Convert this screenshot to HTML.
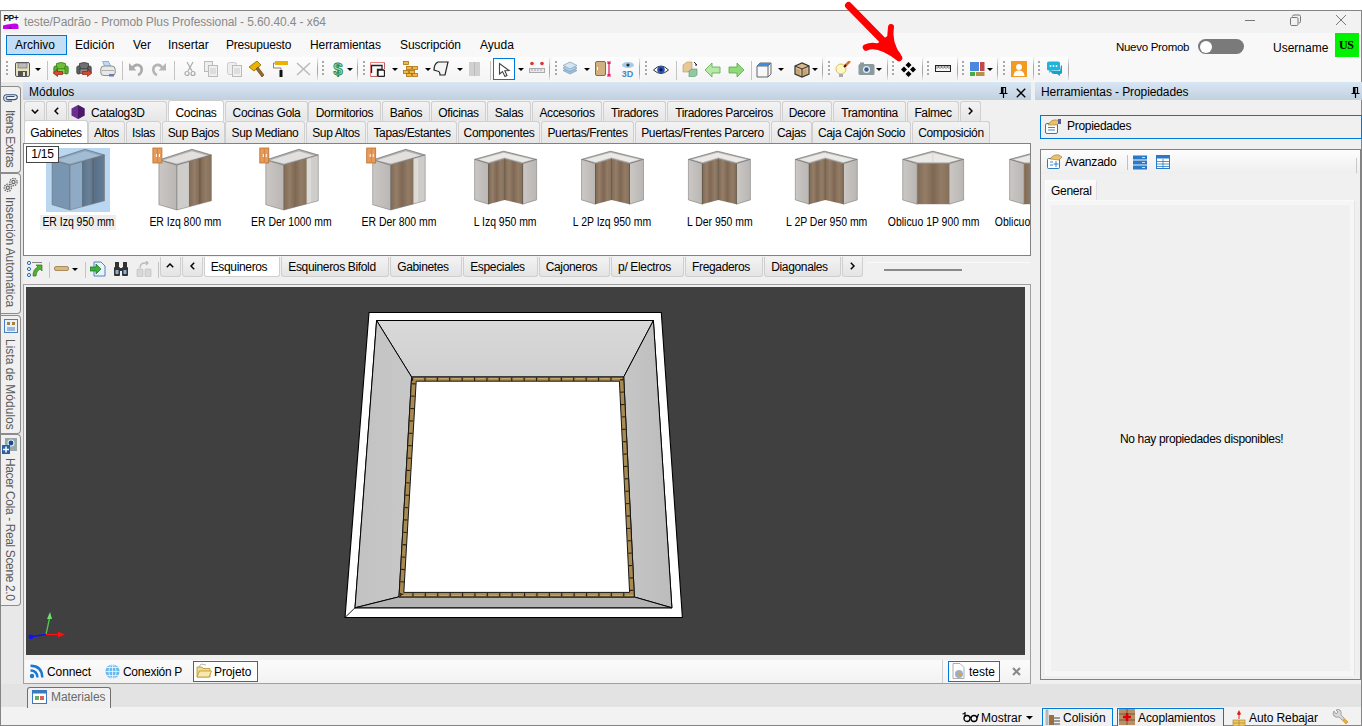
<!DOCTYPE html>
<html><head><meta charset="utf-8">
<style>
*{box-sizing:border-box}
html,body{margin:0;padding:0}
body{width:1362px;height:726px;overflow:hidden;position:relative;background:#fff;font-family:"Liberation Sans",sans-serif;font-size:12px;color:#000}
.a{position:absolute}
.t{position:absolute;white-space:nowrap;line-height:14px}
</style></head><body>
<!-- window frame -->
<div class="a" style="left:0;top:10px;width:1362px;height:716px;background:#f0f0f0;border:1px solid #858585;border-bottom:none"></div>
<!-- title bar -->
<div class="a" style="left:1px;top:11px;width:1360px;height:22px;background:#f2f2f2"></div>
<!-- menu bar -->
<div class="a" style="left:1px;top:33px;width:1360px;height:24px;background:#f8f8f8"></div>
<!-- toolbar band -->
<div class="a" style="left:1px;top:57px;width:1360px;height:25px;background:#f8f8f8"></div>

<!-- Modulos header -->
<div class="a" style="left:23px;top:82px;width:1008px;height:18px;background:linear-gradient(#d9e6f4,#c1d0e0)"></div>
<!-- right panel header -->
<div class="a" style="left:1035px;top:82px;width:327px;height:18px;background:linear-gradient(#d9e6f4,#c1d0e0)"></div>

<!-- module content box -->
<div class="a" style="left:23px;top:143px;width:1008px;height:113px;background:#fff;border:1px solid #828282"></div>

<!-- 3D viewport -->
<div class="a" style="left:26px;top:287px;width:999px;height:368px;background:#404040"></div>

<!-- bottom band -->
<div class="a" style="left:1px;top:684px;width:1360px;height:23px;background:#e3e3e3"></div>
<!-- status bar -->
<div class="a" style="left:1px;top:707px;width:1360px;height:18px;background:#f2f2f2"></div>
<div class="a" style="left:0;top:725px;width:1362px;height:1px;background:#858585"></div>

<!-- property box -->
<div class="a" style="left:1040px;top:149px;width:321px;height:530px;background:#f0f0f0;border:1px solid #828282"></div>


<!-- ===== TITLE BAR ===== -->
<svg class="a" style="left:2px;top:13px" width="17" height="17" viewBox="0 0 17 17">
<rect x="0" y="0" width="17" height="17" fill="#f7f7f7"/>
<text x="1.5" y="8.2" font-family="Liberation Sans" font-weight="bold" font-size="8.5" letter-spacing="-0.6" fill="#111">PP+</text>
<path d="M1 12.5 Q5 11 9 11 Q12 10 15 10.8 Q16.5 11.5 16.5 13 L16.5 16 L1 16 Z" fill="#c400e8"/>
<path d="M6.5 16 L8 13 L10 16Z" fill="#8000a0"/>
</svg>
<div class="t" style="left:24px;top:15px;color:#8a8a8a;letter-spacing:-0.1px">teste/Padrão - Promob Plus Professional - 5.60.40.4 - x64</div>
<div class="a" style="left:1245px;top:20px;width:10px;height:1px;background:#777"></div>
<svg class="a" style="left:1289px;top:14px" width="13" height="13" viewBox="0 0 13 13"><path d="M3.5 2.5 Q3.5 1 5 1 H10 Q11.5 1 11.5 2.5 V7.5 Q11.5 9 10 9" fill="none" stroke="#777" stroke-width="1"/><rect x="1.5" y="3.5" width="7.5" height="8" rx="1.2" fill="none" stroke="#777" stroke-width="1"/></svg>
<svg class="a" style="left:1335px;top:14px" width="12" height="12" viewBox="0 0 12 12"><path d="M1 1 L11 11 M11 1 L1 11" stroke="#777" stroke-width="1"/></svg>

<!-- ===== MENU BAR ===== -->
<div class="a" style="left:6px;top:35px;width:61px;height:20px;background:#c4def5;border:1px solid #0078d7"></div>
<div class="t" style="left:15px;top:38px">Archivo</div>
<div class="t" style="left:75px;top:38px">Edición</div>
<div class="t" style="left:133px;top:38px">Ver</div>
<div class="t" style="left:168px;top:38px">Insertar</div>
<div class="t" style="left:226px;top:38px;letter-spacing:-0.2px">Presupuesto</div>
<div class="t" style="left:310px;top:38px;letter-spacing:-0.1px">Herramientas</div>
<div class="t" style="left:400px;top:38px;letter-spacing:-0.1px">Suscripción</div>
<div class="t" style="left:480px;top:38px">Ayuda</div>
<div class="t" style="left:1116px;top:40px;font-size:11.5px;letter-spacing:-0.3px">Nuevo Promob</div>
<div class="a" style="left:1198px;top:39px;width:46px;height:15px;border-radius:8px;background:#7a7a7a"></div>
<div class="a" style="left:1200px;top:41px;width:12px;height:12px;border-radius:50%;background:#fff"></div>
<div class="t" style="left:1273px;top:41px">Username</div>
<div class="a" style="left:1335px;top:33px;width:24px;height:24px;background:#00f200"></div>
<div class="t" style="left:1339px;top:38px;font-family:'Liberation Serif',serif;font-weight:bold;font-size:12px;letter-spacing:-0.4px">US</div>


<div class="a" style="left:3px;top:57px;width:315px;height:24px;border-radius:3px 3px 0 0;background:linear-gradient(#fdfdfd,#f4f4f4)"></div>
<div class="a" style="left:317px;top:58px;width:1px;height:22px;background:linear-gradient(#f0f0f0,#a8a8a8 40%,#a8a8a8 70%,#e8e8e8)"></div>
<div class="a" style="left:6px;top:61px;width:2px;height:15px;background:repeating-linear-gradient(#a8a8a8 0,#a8a8a8 2px,transparent 2px,transparent 4px)"></div>
<div class="a" style="left:319px;top:57px;width:39px;height:24px;border-radius:3px 3px 0 0;background:linear-gradient(#fdfdfd,#f4f4f4)"></div>
<div class="a" style="left:357px;top:58px;width:1px;height:22px;background:linear-gradient(#f0f0f0,#a8a8a8 40%,#a8a8a8 70%,#e8e8e8)"></div>
<div class="a" style="left:322px;top:61px;width:2px;height:15px;background:repeating-linear-gradient(#a8a8a8 0,#a8a8a8 2px,transparent 2px,transparent 4px)"></div>
<div class="a" style="left:360px;top:57px;width:190px;height:24px;border-radius:3px 3px 0 0;background:linear-gradient(#fdfdfd,#f4f4f4)"></div>
<div class="a" style="left:549px;top:58px;width:1px;height:22px;background:linear-gradient(#f0f0f0,#a8a8a8 40%,#a8a8a8 70%,#e8e8e8)"></div>
<div class="a" style="left:363px;top:61px;width:2px;height:15px;background:repeating-linear-gradient(#a8a8a8 0,#a8a8a8 2px,transparent 2px,transparent 4px)"></div>
<div class="a" style="left:552px;top:57px;width:88px;height:24px;border-radius:3px 3px 0 0;background:linear-gradient(#fdfdfd,#f4f4f4)"></div>
<div class="a" style="left:639px;top:58px;width:1px;height:22px;background:linear-gradient(#f0f0f0,#a8a8a8 40%,#a8a8a8 70%,#e8e8e8)"></div>
<div class="a" style="left:555px;top:61px;width:2px;height:15px;background:repeating-linear-gradient(#a8a8a8 0,#a8a8a8 2px,transparent 2px,transparent 4px)"></div>
<div class="a" style="left:642px;top:57px;width:181px;height:24px;border-radius:3px 3px 0 0;background:linear-gradient(#fdfdfd,#f4f4f4)"></div>
<div class="a" style="left:822px;top:58px;width:1px;height:22px;background:linear-gradient(#f0f0f0,#a8a8a8 40%,#a8a8a8 70%,#e8e8e8)"></div>
<div class="a" style="left:645px;top:61px;width:2px;height:15px;background:repeating-linear-gradient(#a8a8a8 0,#a8a8a8 2px,transparent 2px,transparent 4px)"></div>
<div class="a" style="left:825px;top:57px;width:63px;height:24px;border-radius:3px 3px 0 0;background:linear-gradient(#fdfdfd,#f4f4f4)"></div>
<div class="a" style="left:887px;top:58px;width:1px;height:22px;background:linear-gradient(#f0f0f0,#a8a8a8 40%,#a8a8a8 70%,#e8e8e8)"></div>
<div class="a" style="left:828px;top:61px;width:2px;height:15px;background:repeating-linear-gradient(#a8a8a8 0,#a8a8a8 2px,transparent 2px,transparent 4px)"></div>
<div class="a" style="left:889px;top:57px;width:34px;height:24px;border-radius:3px 3px 0 0;background:linear-gradient(#fdfdfd,#f4f4f4)"></div>
<div class="a" style="left:922px;top:58px;width:1px;height:22px;background:linear-gradient(#f0f0f0,#a8a8a8 40%,#a8a8a8 70%,#e8e8e8)"></div>
<div class="a" style="left:892px;top:61px;width:2px;height:15px;background:repeating-linear-gradient(#a8a8a8 0,#a8a8a8 2px,transparent 2px,transparent 4px)"></div>
<div class="a" style="left:924px;top:57px;width:34px;height:24px;border-radius:3px 3px 0 0;background:linear-gradient(#fdfdfd,#f4f4f4)"></div>
<div class="a" style="left:957px;top:58px;width:1px;height:22px;background:linear-gradient(#f0f0f0,#a8a8a8 40%,#a8a8a8 70%,#e8e8e8)"></div>
<div class="a" style="left:927px;top:61px;width:2px;height:15px;background:repeating-linear-gradient(#a8a8a8 0,#a8a8a8 2px,transparent 2px,transparent 4px)"></div>
<div class="a" style="left:959px;top:57px;width:39px;height:24px;border-radius:3px 3px 0 0;background:linear-gradient(#fdfdfd,#f4f4f4)"></div>
<div class="a" style="left:997px;top:58px;width:1px;height:22px;background:linear-gradient(#f0f0f0,#a8a8a8 40%,#a8a8a8 70%,#e8e8e8)"></div>
<div class="a" style="left:962px;top:61px;width:2px;height:15px;background:repeating-linear-gradient(#a8a8a8 0,#a8a8a8 2px,transparent 2px,transparent 4px)"></div>
<div class="a" style="left:1000px;top:57px;width:34px;height:24px;border-radius:3px 3px 0 0;background:linear-gradient(#fdfdfd,#f4f4f4)"></div>
<div class="a" style="left:1033px;top:58px;width:1px;height:22px;background:linear-gradient(#f0f0f0,#a8a8a8 40%,#a8a8a8 70%,#e8e8e8)"></div>
<div class="a" style="left:1003px;top:61px;width:2px;height:15px;background:repeating-linear-gradient(#a8a8a8 0,#a8a8a8 2px,transparent 2px,transparent 4px)"></div>
<div class="a" style="left:1035px;top:57px;width:34px;height:24px;border-radius:3px 3px 0 0;background:linear-gradient(#fdfdfd,#f4f4f4)"></div>
<div class="a" style="left:1068px;top:58px;width:1px;height:22px;background:linear-gradient(#f0f0f0,#a8a8a8 40%,#a8a8a8 70%,#e8e8e8)"></div>
<div class="a" style="left:1038px;top:61px;width:2px;height:15px;background:repeating-linear-gradient(#a8a8a8 0,#a8a8a8 2px,transparent 2px,transparent 4px)"></div>
<svg class="a" style="left:15px;top:62px" width="15" height="15" viewBox="0 0 15 15"><rect x="0.5" y="0.5" width="14" height="14" rx="1.5" fill="#e6e2c0" stroke="#555"/><rect x="3" y="1" width="9" height="5" fill="#bbb" stroke="#666" stroke-width="0.6"/><rect x="3" y="9" width="9" height="6" fill="#555"/><rect x="8" y="10" width="2" height="4" fill="#e6e2c0"/></svg>
<svg class="a" style="left:35px;top:68px" width="6" height="4" viewBox="0 0 6 4"><path d="M0 0H6L3 3Z" fill="#000"/></svg>
<div class="a" style="left:47px;top:61px;width:1px;height:19px;background:#c4c4c4"></div>
<svg class="a" style="left:53px;top:61px" width="16" height="16" viewBox="0 0 16 16"><path d="M3.5 2.5 Q8 0.5 12.5 2.5 L12.5 8 L3.5 8Z" fill="#6cc03a" stroke="#3a7a1a" stroke-width="0.8"/><rect x="0.8" y="5" width="3.5" height="8" rx="1.5" fill="#5aae2e" stroke="#3a7a1a" stroke-width="0.8"/><rect x="11.7" y="5" width="3.5" height="8" rx="1.5" fill="#5aae2e" stroke="#3a7a1a" stroke-width="0.8"/><rect x="4" y="8" width="8" height="4.5" fill="#88d050" stroke="#3a7a1a" stroke-width="0.6"/><path d="M0.3 12 L4.5 8.5 V10.5 H9.5 V13.5 H4.5 V15.5Z" fill="#d84a30" stroke="#8a2010" stroke-width="0.7"/></svg>
<svg class="a" style="left:76px;top:61px" width="16" height="16" viewBox="0 0 16 16"><path d="M3.5 2.5 Q8 0.5 12.5 2.5 L12.5 8 L3.5 8Z" fill="#707070" stroke="#3a3a3a" stroke-width="0.8"/><rect x="0.8" y="5" width="3.5" height="8" rx="1.5" fill="#606060" stroke="#3a3a3a" stroke-width="0.8"/><rect x="11.7" y="5" width="3.5" height="8" rx="1.5" fill="#606060" stroke="#3a3a3a" stroke-width="0.8"/><rect x="4" y="8" width="8" height="4.5" fill="#8a8a8a" stroke="#3a3a3a" stroke-width="0.6"/><path d="M15.7 12 L11.5 8.5 V10.5 H6.5 V13.5 H11.5 V15.5Z" fill="#d84a30" stroke="#8a2010" stroke-width="0.7"/></svg>
<svg class="a" style="left:100px;top:61px" width="16" height="16" viewBox="0 0 16 16"><path d="M2.5 0.5 L8.5 0.5 L11 6 L5 6Z" fill="#b8dcf8" stroke="#6a8aa8" stroke-width="0.6"/><path d="M0.8 8 Q0.8 5 4 5 L12 5 Q15.2 5 15.2 8.5 L15.2 12 Q15.2 14.5 12 14.5 L4 14.5 Q0.8 14.5 0.8 12Z" fill="#e8e8e8" stroke="#777" stroke-width="0.8"/><path d="M2 9.5 H14" stroke="#999" stroke-width="0.7"/><rect x="9" y="13" width="5" height="2.5" fill="#6a7ab8"/></svg>
<div class="a" style="left:122px;top:61px;width:1px;height:19px;background:#c4c4c4"></div>
<svg class="a" style="left:128px;top:61px" width="16" height="16" viewBox="0 0 16 16"><path d="M4 7.5 Q7 3 10.5 4 Q14.5 5.5 13.5 10 Q12.8 13 10 14" fill="none" stroke="#ababab" stroke-width="2.6"/><path d="M1 2 L1 9.5 L8.5 9.5Z" fill="#ababab"/></svg>
<svg class="a" style="left:151px;top:61px" width="16" height="16" viewBox="0 0 16 16"><path d="M12 7.5 Q9 3 5.5 4 Q1.5 5.5 2.5 10 Q3.2 13 6 14" fill="none" stroke="#b5b5b5" stroke-width="2.6"/><path d="M15 2 L15 9.5 L7.5 9.5Z" fill="#b5b5b5"/></svg>
<div class="a" style="left:174px;top:61px;width:1px;height:19px;background:#c4c4c4"></div>
<svg class="a" style="left:182px;top:61px" width="16" height="16" viewBox="0 0 16 16"><path d="M5 1 L10 10 M11 1 L6 10" stroke="#aaa" stroke-width="1.2"/><circle cx="5" cy="12.5" r="2" fill="none" stroke="#aaa" stroke-width="1.2"/><circle cx="11" cy="12.5" r="2" fill="none" stroke="#aaa" stroke-width="1.2"/></svg>
<svg class="a" style="left:204px;top:61px" width="16" height="16" viewBox="0 0 16 16"><rect x="0.5" y="0.5" width="8" height="10" fill="#eee" stroke="#bbb"/><rect x="4.5" y="4.5" width="9" height="11" fill="#eee" stroke="#bbb"/><path d="M6 8H12M6 10H12M6 12H12" stroke="#ccc"/></svg>
<svg class="a" style="left:227px;top:61px" width="16" height="16" viewBox="0 0 16 16"><rect x="0.5" y="1.5" width="9" height="12" rx="2" fill="#eee" stroke="#ccc"/><rect x="5.5" y="4.5" width="9" height="11" fill="#f0f0f0" stroke="#bbb"/><path d="M7 8H13M7 10H13M7 12H13" stroke="#ccc"/></svg>
<svg class="a" style="left:249px;top:61px" width="16" height="16" viewBox="0 0 16 16"><path d="M0 6 L8 0 L12 4 L5 10Z" fill="#e8b400" stroke="#8a6a00" stroke-width="0.8"/><path d="M7 8 L9 6 L15 14 L13 16Z" fill="#9a6a20" stroke="#5a3a10" stroke-width="0.6"/></svg>
<svg class="a" style="left:273px;top:61px" width="16" height="16" viewBox="0 0 16 16"><rect x="2" y="0" width="13" height="4" fill="#ecb000"/><path d="M2 2 L0.5 2 L0.5 7 L8 7 L8 10" fill="none" stroke="#666" stroke-width="0.8"/><rect x="6.5" y="9" width="3" height="7" fill="#111"/></svg>
<svg class="a" style="left:296px;top:61px" width="16" height="16" viewBox="0 0 16 16"><path d="M1 2 L14 14 M14 2 L1 14" stroke="#bbb" stroke-width="1.6"/></svg>
<svg class="a" style="left:330px;top:61px" width="16" height="16" viewBox="0 0 16 16"><text x="8" y="14" text-anchor="middle" font-family="Liberation Sans" font-weight="bold" font-size="17" fill="#9be0b8" stroke="#2e8a4a" stroke-width="0.9">$</text></svg>
<svg class="a" style="left:347px;top:68px" width="6" height="4" viewBox="0 0 6 4"><path d="M0 0H6L3 3Z" fill="#000"/></svg>
<svg class="a" style="left:370px;top:62px" width="15" height="15" viewBox="0 0 15 15"><path d="M0.5 14.5V0.5H14.5" fill="none" stroke="#f08080" stroke-width="1"/><path d="M0.5 14.5H7M14.5 0.5V7" fill="none" stroke="#c06060" stroke-width="1"/><path d="M1.5 11 V3.5 H12 V7.5 H7.5 V14.5" fill="none" stroke="#222" stroke-width="1.3"/><rect x="8" y="8" width="6.5" height="6.5" rx="1.2" fill="#fff" stroke="#222" stroke-width="1.3"/></svg>
<svg class="a" style="left:392px;top:68px" width="6" height="4" viewBox="0 0 6 4"><path d="M0 0H6L3 3Z" fill="#000"/></svg>
<svg class="a" style="left:403px;top:61px" width="16" height="16" viewBox="0 0 16 16"><g fill="#f0b840" stroke="#a87010" stroke-width="0.8"><rect x="0.5" y="0.5" width="5" height="3"/><rect x="3.5" y="5.5" width="5" height="3"/><rect x="9.5" y="5.5" width="5" height="3"/><rect x="0.5" y="9.5" width="5" height="3"/><rect x="6.5" y="9.5" width="5" height="3"/><rect x="3.5" y="12.5" width="5" height="3"/><rect x="9.5" y="12.5" width="5" height="3"/></g></svg>
<svg class="a" style="left:425px;top:68px" width="6" height="4" viewBox="0 0 6 4"><path d="M0 0H6L3 3Z" fill="#000"/></svg>
<svg class="a" style="left:433px;top:61px" width="16" height="16" viewBox="0 0 16 16"><path d="M1 9 Q1 3 5 1 L15 1 L12 14 L7 14 Q7 10 4 10 Z" fill="#f4f4f4" stroke="#222" stroke-width="1.2"/></svg>
<svg class="a" style="left:457px;top:68px" width="6" height="4" viewBox="0 0 6 4"><path d="M0 0H6L3 3Z" fill="#000"/></svg>
<svg class="a" style="left:469px;top:61px" width="12" height="16" viewBox="0 0 12 16"><rect x="0" y="1" width="11" height="14" fill="#d0d0d0"/><path d="M5.5 1V15" stroke="#bbb"/></svg>
<div class="a" style="left:490px;top:61px;width:1px;height:19px;background:#c4c4c4"></div>
<div class="a" style="left:493px;top:58px;width:22px;height:22px;border:1px solid #0078d7;background:#fff"></div>
<svg class="a" style="left:498px;top:62px" width="13" height="16" viewBox="0 0 13 16"><path d="M1.5 1.5 L1.5 12 L4.5 9.5 L7 14.5 L9 13.5 L6.8 8.7 L11 8.5 Z" fill="#fff" stroke="#444" stroke-width="1.1"/></svg>
<svg class="a" style="left:518px;top:68px" width="6" height="4" viewBox="0 0 6 4"><path d="M0 0H6L3 3Z" fill="#000"/></svg>
<svg class="a" style="left:529px;top:61px" width="16" height="16" viewBox="0 0 16 16"><circle cx="3" cy="2.5" r="1.8" fill="#e03030"/><circle cx="13" cy="2.5" r="1.8" fill="#e03030"/><rect x="0.5" y="7.5" width="15" height="4" fill="#e8e8f0" stroke="#aaa"/><path d="M3 8V10M6 8V10M9 8V10M12 8V10" stroke="#888" stroke-width="0.7"/></svg>
<svg class="a" style="left:562px;top:61px" width="16" height="16" viewBox="0 0 16 16"><g stroke="#7a9ab8" stroke-width="0.7"><path d="M8 6 L15 9.5 L8 13 L1 9.5Z" fill="#9fc0dc"/><path d="M8 3.5 L15 7 L8 10.5 L1 7Z" fill="#b8d4ea"/><path d="M8 1 L15 4.5 L8 8 L1 4.5Z" fill="#d4e6f4"/></g></svg>
<svg class="a" style="left:584px;top:68px" width="6" height="4" viewBox="0 0 6 4"><path d="M0 0H6L3 3Z" fill="#000"/></svg>
<svg class="a" style="left:595px;top:61px" width="17" height="16" viewBox="0 0 17 16"><rect x="0.5" y="0.5" width="10" height="14" rx="1.5" fill="#d2b080" stroke="#8a6a40"/><rect x="2" y="6" width="1" height="3" fill="#fff"/><path d="M14 1V15M12 1H16M12 15H16" stroke="#e0185a" stroke-width="1.2"/><path d="M12 3L14 1L16 3M12 13L14 15L16 13" fill="#e0185a"/></svg>
<svg class="a" style="left:620px;top:61px" width="16" height="16" viewBox="0 0 16 16"><ellipse cx="8" cy="4" rx="6" ry="3" fill="#a8c8e8"/><circle cx="8" cy="4" r="1.6" fill="#233"/><text x="7.5" y="15.5" text-anchor="middle" font-family="Liberation Sans" font-weight="bold" font-size="9" fill="#4a88c0">3D</text></svg>
<svg class="a" style="left:653px;top:62px" width="16" height="16" viewBox="0 0 16 16"><path d="M0.5 8 Q8 0 15.5 8 Q8 15 0.5 8Z" fill="#fff" stroke="#333" stroke-width="1"/><circle cx="8" cy="7.8" r="3.8" fill="#2a50b0"/><circle cx="8" cy="7.8" r="1.5" fill="#0a1a40"/></svg>
<div class="a" style="left:676px;top:61px;width:1px;height:19px;background:#c4c4c4"></div>
<svg class="a" style="left:682px;top:61px" width="16" height="16" viewBox="0 0 16 16"><path d="M1 4 L5 1 L10 1 L10 8 L6 11 L1 11Z" fill="#e8c896" stroke="#b89060" stroke-width="0.6"/><path d="M7 10 L10 8 L15 8 L15 14 L12 16 L7 16Z" fill="#90c8a0" stroke="#5a9070" stroke-width="0.6"/><path d="M12 1 L15 4 L13 4" fill="none" stroke="#222"/></svg>
<svg class="a" style="left:705px;top:62px" width="16" height="16" viewBox="0 0 16 16"><path d="M0 8 L7 1 L7 5 L15 5 L15 11 L7 11 L7 15Z" fill="#b8e8a8" stroke="#58a848" stroke-width="0.8"/></svg>
<svg class="a" style="left:728px;top:62px" width="16" height="16" viewBox="0 0 16 16"><path d="M16 8 L9 1 L9 5 L1 5 L1 11 L9 11 L9 15Z" fill="#90d878" stroke="#58a848" stroke-width="0.8"/></svg>
<div class="a" style="left:751px;top:61px;width:1px;height:19px;background:#c4c4c4"></div>
<svg class="a" style="left:756px;top:62px" width="16" height="16" viewBox="0 0 16 16"><path d="M1 4 L4 1 L15 1 L15 12 L12 15 L1 15Z M1 4H12V15 M12 4L15 1" fill="none" stroke="#666" stroke-width="1"/><path d="M4 1 L15 1 L12 4 L1 4Z" fill="#3b8ee8"/></svg>
<svg class="a" style="left:778px;top:68px" width="6" height="4" viewBox="0 0 6 4"><path d="M0 0H6L3 3Z" fill="#000"/></svg>
<svg class="a" style="left:794px;top:62px" width="16" height="16" viewBox="0 0 16 16"><path d="M1 4 L8 1 L15 4 L15 12 L8 15 L1 12Z" fill="#d8b888" stroke="#333" stroke-width="1.2"/><path d="M1 4 L8 7 L15 4 M8 7V15" fill="none" stroke="#333" stroke-width="1"/><path d="M3 7V12M5 8V13M10 8V13M12 7V12" stroke="#9a7a50" stroke-width="0.6"/></svg>
<svg class="a" style="left:812px;top:68px" width="6" height="4" viewBox="0 0 6 4"><path d="M0 0H6L3 3Z" fill="#000"/></svg>
<svg class="a" style="left:835px;top:61px" width="17" height="16" viewBox="0 0 17 16"><circle cx="6" cy="8" r="5" fill="#fff6c0" stroke="#d8c070" stroke-width="1"/><rect x="4" y="13" width="4" height="3" fill="#aaa"/><path d="M10 5 L15 0" stroke="#e07020" stroke-width="2.5"/><path d="M9 6 L11 4" stroke="#222" stroke-width="2"/></svg>
<svg class="a" style="left:858px;top:61px" width="17" height="16" viewBox="0 0 17 16"><rect x="0.5" y="3" width="16" height="11" rx="1.5" fill="#8a9a9e"/><rect x="2" y="1.5" width="4" height="2" fill="#8a9a9e"/><circle cx="8.5" cy="8.5" r="3.5" fill="#e8f0f8"/><circle cx="8.5" cy="8.5" r="2.2" fill="#3a6090"/></svg>
<svg class="a" style="left:876px;top:68px" width="6" height="4" viewBox="0 0 6 4"><path d="M0 0H6L3 3Z" fill="#000"/></svg>
<svg class="a" style="left:901px;top:62px" width="15" height="15" viewBox="0 0 15 15"><g fill="#000"><path d="M7.5 0 L10.5 3 L7.5 6 L4.5 3Z"/><path d="M3 4.5 L6 7.5 L3 10.5 L0 7.5Z"/><path d="M12 4.5 L15 7.5 L12 10.5 L9 7.5Z"/><path d="M7.5 9 L10.5 12 L7.5 15 L4.5 12Z"/></g></svg>
<svg class="a" style="left:935px;top:61px" width="16" height="16" viewBox="0 0 16 16"><rect x="0.5" y="4.5" width="15" height="6" fill="#f8f8f8" stroke="#222" stroke-width="1"/><path d="M2 5V8M3.5 5V7M5 5V8M6.5 5V7M8 5V8M9.5 5V7M11 5V8M12.5 5V7M14 5V8" stroke="#333" stroke-width="0.6"/></svg>
<svg class="a" style="left:970px;top:61px" width="16" height="16" viewBox="0 0 16 16"><rect x="0" y="1" width="9" height="9" fill="#4a88e0"/><rect x="10" y="1" width="4.5" height="9" fill="#c04848"/><rect x="0" y="11" width="5" height="4" fill="#40b040"/><rect x="6" y="11" width="8.5" height="4" fill="#b89048"/></svg>
<svg class="a" style="left:987px;top:68px" width="6" height="4" viewBox="0 0 6 4"><path d="M0 0H6L3 3Z" fill="#000"/></svg>
<svg class="a" style="left:1011px;top:61px" width="16" height="16" viewBox="0 0 16 16"><rect x="0" y="0" width="16" height="16" fill="#f49a20"/><circle cx="8" cy="6" r="3" fill="#fff"/><path d="M2.5 15 Q3 9.5 8 9.5 Q13 9.5 13.5 15Z" fill="#fff"/></svg>
<svg class="a" style="left:1046px;top:61px" width="16" height="16" viewBox="0 0 16 16"><path d="M1 2 Q1 0.5 3 0.5 L12 0.5 Q14 0.5 14 2 L14 8 Q14 9.5 12 9.5 L6 9.5 L3 12 L3.5 9.5 L3 9.5 Q1 9.5 1 8Z" fill="#1eb4dc"/><path d="M5 10 L14 10 L15 4 L16 5 L16 12 Q16 13 14 13 L14 15 L11 13 L8 13 Q6 13 5 11Z" fill="#18a0c8"/><circle cx="4.5" cy="5" r="0.9" fill="#fff"/><circle cx="7.5" cy="5" r="0.9" fill="#fff"/><circle cx="10.5" cy="5" r="0.9" fill="#fff"/></svg>
<div class="a" style="left:1px;top:82px;width:22px;height:602px;background:#e8e8e8"></div>
<div class="a" style="left:1px;top:86px;width:20px;height:87px;background:#f0f0f0;border:1px solid #8c8c8c;border-left:none;border-radius:0 4px 4px 0"></div>
<div class="t" style="left:5px;top:109.5px;letter-spacing:-0.5px;transform-origin:0 0;transform:translate(12px,0) rotate(90deg);color:#5a5a5a">Itens Extras</div>
<div class="a" style="left:1px;top:173px;width:20px;height:141px;background:#f0f0f0;border:1px solid #8c8c8c;border-left:none;border-radius:0 4px 4px 0"></div>
<div class="t" style="left:5px;top:196.5px;letter-spacing:-0.07px;transform-origin:0 0;transform:translate(12px,0) rotate(90deg);color:#5a5a5a">Inserción Automática</div>
<div class="a" style="left:1px;top:315px;width:20px;height:119px;background:#f0f0f0;border:1px solid #8c8c8c;border-left:none;border-radius:0 4px 4px 0"></div>
<div class="t" style="left:5px;top:338.5px;letter-spacing:0px;transform-origin:0 0;transform:translate(12px,0) rotate(90deg);color:#5a5a5a">Lista de Módulos</div>
<div class="a" style="left:1px;top:434px;width:20px;height:172px;background:#f0f0f0;border:1px solid #8c8c8c;border-left:none;border-radius:0 4px 4px 0"></div>
<div class="t" style="left:5px;top:457.5px;letter-spacing:-0.38px;transform-origin:0 0;transform:translate(12px,0) rotate(90deg);color:#5a5a5a">Hacer Cola - Real Scene 2.0</div>
<svg class="a" style="left:3px;top:94px" width="15" height="8" viewBox="0 0 15 8"><path d="M9 7.3 H3.6 Q0.7 7.3 0.7 4 Q0.7 0.7 3.6 0.7 H11.5 Q14.3 0.7 14.3 3.3 Q14.3 5.6 11.5 5.6 H5 Q3 5.6 3 4 Q3 2.4 5 2.4 H11.5" fill="none" stroke="#34507a" stroke-width="1.05"/></svg>
<svg class="a" style="left:3px;top:177px" width="15" height="16" viewBox="0 0 15 16"><g fill="none" stroke="#6a6a6a" stroke-width="1.2"><circle cx="4.8" cy="10.8" r="3.6" stroke-dasharray="1.6 0.9"/><circle cx="4.8" cy="10.8" r="1.6"/><circle cx="10.5" cy="5" r="3.6" stroke-dasharray="1.6 0.9"/><circle cx="10.5" cy="5" r="1.6"/></g></svg>
<svg class="a" style="left:4px;top:319px" width="14" height="14" viewBox="0 0 14 14"><rect x="0.5" y="0.5" width="13" height="13" fill="#e8f0f8" stroke="#4a80c0"/><rect x="3" y="3" width="3" height="3" fill="#a88040"/><rect x="8" y="3" width="3" height="3" fill="#a88040"/><path d="M3 9H11M3 11H11" stroke="#4a80c0"/></svg>
<svg class="a" style="left:2px;top:438px" width="16" height="16" viewBox="0 0 16 16"><rect x="3" y="0" width="12" height="13" fill="#98a8a8"/><circle cx="9" cy="5" r="3.5" fill="#e0f0f8"/><circle cx="9" cy="5" r="2.4" fill="#1a4a8a"/><rect x="0" y="7" width="8" height="9" fill="#2a60a8"/><path d="M4 8.5V14.5M1 11.5H7" stroke="#fff" stroke-width="1.5"/></svg>
<div class="t" style="left:29px;top:85px;">Módulos</div>
<svg class="a" style="left:999px;top:87px" width="9" height="11" viewBox="0 0 9 11"><path d="M2 0.5H7M2.5 0.5V6M6.5 0.5V6M0.5 6.5H8.5M4.5 6.5V11" stroke="#000" stroke-width="1.2" fill="none"/><rect x="2.5" y="1" width="2" height="5" fill="#000"/></svg>
<svg class="a" style="left:1016px;top:88px" width="10" height="10" viewBox="0 0 10 10"><path d="M0.8 0.8L9.2 9.2M9.2 0.8L0.8 9.2" stroke="#000" stroke-width="1.4"/></svg>
<div class="a" style="left:24px;top:101px;width:21px;height:20px;background:linear-gradient(#f3f3f3,#e6e6e6);border:1px solid #cfcfcf;border-bottom:none;border-radius:3px 3px 0 0"></div>
<div class="a" style="left:46px;top:101px;width:21px;height:20px;background:linear-gradient(#f3f3f3,#e6e6e6);border:1px solid #cfcfcf;border-bottom:none;border-radius:3px 3px 0 0"></div>
<div class="a" style="left:68px;top:101px;width:99px;height:20px;background:linear-gradient(#f3f3f3,#e6e6e6);border:1px solid #cfcfcf;border-bottom:none;border-radius:3px 3px 0 0"></div>
<div class="a" style="left:168px;top:100px;width:56px;height:21px;background:#ffffff;border:1px solid #cfcfcf;border-bottom:none;border-radius:3px 3px 0 0"></div>
<div class="t" style="left:168px;top:106px;width:56px;text-align:center;letter-spacing:-0.35px">Cocinas</div>
<div class="a" style="left:225px;top:101px;width:83px;height:20px;background:linear-gradient(#f3f3f3,#e6e6e6);border:1px solid #cfcfcf;border-bottom:none;border-radius:3px 3px 0 0"></div>
<div class="t" style="left:225px;top:106px;width:83px;text-align:center;letter-spacing:-0.35px">Cocinas Gola</div>
<div class="a" style="left:308px;top:101px;width:73px;height:20px;background:linear-gradient(#f3f3f3,#e6e6e6);border:1px solid #cfcfcf;border-bottom:none;border-radius:3px 3px 0 0"></div>
<div class="t" style="left:308px;top:106px;width:73px;text-align:center;letter-spacing:-0.35px">Dormitorios</div>
<div class="a" style="left:382px;top:101px;width:48px;height:20px;background:linear-gradient(#f3f3f3,#e6e6e6);border:1px solid #cfcfcf;border-bottom:none;border-radius:3px 3px 0 0"></div>
<div class="t" style="left:382px;top:106px;width:48px;text-align:center;letter-spacing:-0.35px">Baños</div>
<div class="a" style="left:431px;top:101px;width:55px;height:20px;background:linear-gradient(#f3f3f3,#e6e6e6);border:1px solid #cfcfcf;border-bottom:none;border-radius:3px 3px 0 0"></div>
<div class="t" style="left:431px;top:106px;width:55px;text-align:center;letter-spacing:-0.35px">Oficinas</div>
<div class="a" style="left:487px;top:101px;width:44px;height:20px;background:linear-gradient(#f3f3f3,#e6e6e6);border:1px solid #cfcfcf;border-bottom:none;border-radius:3px 3px 0 0"></div>
<div class="t" style="left:487px;top:106px;width:44px;text-align:center;letter-spacing:-0.35px">Salas</div>
<div class="a" style="left:532px;top:101px;width:70px;height:20px;background:linear-gradient(#f3f3f3,#e6e6e6);border:1px solid #cfcfcf;border-bottom:none;border-radius:3px 3px 0 0"></div>
<div class="t" style="left:532px;top:106px;width:70px;text-align:center;letter-spacing:-0.35px">Accesorios</div>
<div class="a" style="left:603px;top:101px;width:63px;height:20px;background:linear-gradient(#f3f3f3,#e6e6e6);border:1px solid #cfcfcf;border-bottom:none;border-radius:3px 3px 0 0"></div>
<div class="t" style="left:603px;top:106px;width:63px;text-align:center;letter-spacing:-0.35px">Tiradores</div>
<div class="a" style="left:667px;top:101px;width:114px;height:20px;background:linear-gradient(#f3f3f3,#e6e6e6);border:1px solid #cfcfcf;border-bottom:none;border-radius:3px 3px 0 0"></div>
<div class="t" style="left:667px;top:106px;width:114px;text-align:center;letter-spacing:-0.35px">Tiradores Parceiros</div>
<div class="a" style="left:782px;top:101px;width:50px;height:20px;background:linear-gradient(#f3f3f3,#e6e6e6);border:1px solid #cfcfcf;border-bottom:none;border-radius:3px 3px 0 0"></div>
<div class="t" style="left:782px;top:106px;width:50px;text-align:center;letter-spacing:-0.35px">Decore</div>
<div class="a" style="left:833px;top:101px;width:73px;height:20px;background:linear-gradient(#f3f3f3,#e6e6e6);border:1px solid #cfcfcf;border-bottom:none;border-radius:3px 3px 0 0"></div>
<div class="t" style="left:833px;top:106px;width:73px;text-align:center;letter-spacing:-0.35px">Tramontina</div>
<div class="a" style="left:907px;top:101px;width:52px;height:20px;background:linear-gradient(#f3f3f3,#e6e6e6);border:1px solid #cfcfcf;border-bottom:none;border-radius:3px 3px 0 0"></div>
<div class="t" style="left:907px;top:106px;width:52px;text-align:center;letter-spacing:-0.35px">Falmec</div>
<div class="a" style="left:960px;top:101px;width:21px;height:20px;background:linear-gradient(#f3f3f3,#e6e6e6);border:1px solid #cfcfcf;border-bottom:none;border-radius:3px 3px 0 0"></div>
<div class="t" style="left:91px;top:106px;letter-spacing:-0.35px">Catalog3D</div>
<svg class="a" style="left:71px;top:105px" width="14" height="14" viewBox="0 0 14 14"><path d="M7 0 L13.5 3.5 L13.5 10.5 L7 14 L0.5 10.5 L0.5 3.5Z" fill="#6b2d8e"/><path d="M7 0 L13.5 3.5 L13.5 10.5 L7 14Z" fill="#4a1868"/></svg>
<svg class="a" style="left:31px;top:109px" width="8" height="5" viewBox="0 0 8 5"><path d="M0.8 0.8L4 4L7.2 0.8" fill="none" stroke="#000" stroke-width="1.5"/></svg>
<svg class="a" style="left:54px;top:107px" width="5" height="8" viewBox="0 0 5 8"><path d="M4.2 0.8L1 4L4.2 7.2" fill="none" stroke="#000" stroke-width="1.5"/></svg>
<svg class="a" style="left:968px;top:107px" width="5" height="8" viewBox="0 0 5 8"><path d="M0.8 0.8L4 4L0.8 7.2" fill="none" stroke="#000" stroke-width="1.5"/></svg>
<div class="a" style="left:24px;top:120px;width:64px;height:23px;background:#ffffff;border:1px solid #cfcfcf;border-bottom:none;border-radius:3px 3px 0 0"></div>
<div class="t" style="left:24px;top:126px;width:64px;text-align:center;letter-spacing:-0.35px">Gabinetes</div>
<div class="a" style="left:88px;top:121px;width:37px;height:22px;background:linear-gradient(#f3f3f3,#e6e6e6);border:1px solid #cfcfcf;border-bottom:none;border-radius:3px 3px 0 0"></div>
<div class="t" style="left:88px;top:126px;width:37px;text-align:center;letter-spacing:-0.35px">Altos</div>
<div class="a" style="left:126px;top:121px;width:35px;height:22px;background:linear-gradient(#f3f3f3,#e6e6e6);border:1px solid #cfcfcf;border-bottom:none;border-radius:3px 3px 0 0"></div>
<div class="t" style="left:126px;top:126px;width:35px;text-align:center;letter-spacing:-0.35px">Islas</div>
<div class="a" style="left:162px;top:121px;width:63px;height:22px;background:linear-gradient(#f3f3f3,#e6e6e6);border:1px solid #cfcfcf;border-bottom:none;border-radius:3px 3px 0 0"></div>
<div class="t" style="left:162px;top:126px;width:63px;text-align:center;letter-spacing:-0.35px">Sup Bajos</div>
<div class="a" style="left:225px;top:121px;width:80px;height:22px;background:linear-gradient(#f3f3f3,#e6e6e6);border:1px solid #cfcfcf;border-bottom:none;border-radius:3px 3px 0 0"></div>
<div class="t" style="left:225px;top:126px;width:80px;text-align:center;letter-spacing:-0.35px">Sup Mediano</div>
<div class="a" style="left:306px;top:121px;width:60px;height:22px;background:linear-gradient(#f3f3f3,#e6e6e6);border:1px solid #cfcfcf;border-bottom:none;border-radius:3px 3px 0 0"></div>
<div class="t" style="left:306px;top:126px;width:60px;text-align:center;letter-spacing:-0.35px">Sup Altos</div>
<div class="a" style="left:367px;top:121px;width:90px;height:22px;background:linear-gradient(#f3f3f3,#e6e6e6);border:1px solid #cfcfcf;border-bottom:none;border-radius:3px 3px 0 0"></div>
<div class="t" style="left:367px;top:126px;width:90px;text-align:center;letter-spacing:-0.35px">Tapas/Estantes</div>
<div class="a" style="left:458px;top:121px;width:82px;height:22px;background:linear-gradient(#f3f3f3,#e6e6e6);border:1px solid #cfcfcf;border-bottom:none;border-radius:3px 3px 0 0"></div>
<div class="t" style="left:458px;top:126px;width:82px;text-align:center;letter-spacing:-0.35px">Componentes</div>
<div class="a" style="left:541px;top:121px;width:93px;height:22px;background:linear-gradient(#f3f3f3,#e6e6e6);border:1px solid #cfcfcf;border-bottom:none;border-radius:3px 3px 0 0"></div>
<div class="t" style="left:541px;top:126px;width:93px;text-align:center;letter-spacing:-0.35px">Puertas/Frentes</div>
<div class="a" style="left:635px;top:121px;width:135px;height:22px;background:linear-gradient(#f3f3f3,#e6e6e6);border:1px solid #cfcfcf;border-bottom:none;border-radius:3px 3px 0 0"></div>
<div class="t" style="left:635px;top:126px;width:135px;text-align:center;letter-spacing:-0.35px">Puertas/Frentes Parcero</div>
<div class="a" style="left:771px;top:121px;width:41px;height:22px;background:linear-gradient(#f3f3f3,#e6e6e6);border:1px solid #cfcfcf;border-bottom:none;border-radius:3px 3px 0 0"></div>
<div class="t" style="left:771px;top:126px;width:41px;text-align:center;letter-spacing:-0.35px">Cajas</div>
<div class="a" style="left:812px;top:121px;width:99px;height:22px;background:linear-gradient(#f3f3f3,#e6e6e6);border:1px solid #cfcfcf;border-bottom:none;border-radius:3px 3px 0 0"></div>
<div class="t" style="left:812px;top:126px;width:99px;text-align:center;letter-spacing:-0.35px">Caja Cajón Socio</div>
<div class="a" style="left:912px;top:121px;width:78px;height:22px;background:linear-gradient(#f3f3f3,#e6e6e6);border:1px solid #cfcfcf;border-bottom:none;border-radius:3px 3px 0 0"></div>
<div class="t" style="left:912px;top:126px;width:78px;text-align:center;letter-spacing:-0.35px">Composición</div>
<svg class="a" style="left:25px;top:144px" width="1005" height="112" viewBox="25 144 1005 112"><defs><linearGradient id="wd" x1="0" x2="1"><stop offset="0" stop-color="#806a55"/><stop offset="0.25" stop-color="#947e68"/><stop offset="0.5" stop-color="#7e6854"/><stop offset="0.75" stop-color="#927c66"/><stop offset="1" stop-color="#86705a"/></linearGradient><linearGradient id="sd" x1="0" x2="1"><stop offset="0" stop-color="#cac7c4"/><stop offset="1" stop-color="#b9b6b3"/></linearGradient><linearGradient id="bwd" x1="0" x2="1"><stop offset="0" stop-color="#5a7288"/><stop offset="0.3" stop-color="#6a8298"/><stop offset="0.6" stop-color="#58708a"/><stop offset="1" stop-color="#667e94"/></linearGradient></defs><rect x="46" y="148" width="64" height="64" fill="#b9d7f1"/><polygon points="52.0,160 85.0,149.3 104.5,155 70.0,165.2" fill="#8aa6c0" stroke="#6e6e6e" stroke-width="0.7"/><polygon points="56.5,160.3 85.0,151.2 100.0,155.5 70.0,163.6" fill="#a2bcd4"/><polygon points="52.0,160 70.0,165.2 70.0,210 52.0,204.7" fill="#7896b2" stroke="#6e6e6e" stroke-width="0.5"/><polygon points="70.0,165.2 82.0,161.7 82.0,206.8 70.0,210.0" fill="#8eaac4"/><polygon points="82.0,161.7 104.5,155.0 104.5,200.8 82.0,206.8" fill="url(#bwd)"/><path d="M93.0 158.4V203.9" stroke="#5a4838" stroke-width="0.6"/><polygon points="70.0,165.2 104.5,155 104.5,200.8 70.0,210" fill="none" stroke="#6e6e6e" stroke-width="0.5"/><polygon points="158.9,160 191.9,149.3 211.4,155 176.9,165.2" fill="#b4b2b0" stroke="#6e6e6e" stroke-width="0.7"/><polygon points="163.4,160.3 191.9,151.2 206.9,155.5 176.9,163.6" fill="#e2e0de"/><polygon points="158.9,160 176.9,165.2 176.9,210 158.9,204.7" fill="url(#sd)" stroke="#6e6e6e" stroke-width="0.5"/><polygon points="176.9,165.2 188.9,161.7 188.9,206.8 176.9,210.0" fill="#cfcdca"/><polygon points="188.9,161.7 211.4,155.0 211.4,200.8 188.9,206.8" fill="url(#wd)"/><path d="M199.9 158.4V203.9" stroke="#5a4838" stroke-width="0.6"/><polygon points="176.9,165.2 211.4,155 211.4,200.8 176.9,210" fill="none" stroke="#6e6e6e" stroke-width="0.5"/><rect x="152.9" y="148" width="9" height="15" fill="#e89a58" stroke="#b87030" stroke-width="0.8"/><path d="M157.4 149V162" stroke="#b86a28" stroke-width="0.5"/><rect x="155.9" y="154" width="1" height="3" fill="#fff"/><rect x="158.9" y="154" width="1" height="3" fill="#fff"/><polygon points="265.8,160 298.8,149.3 318.3,155 283.8,165.2" fill="#b4b2b0" stroke="#6e6e6e" stroke-width="0.7"/><polygon points="270.3,160.3 298.8,151.2 313.8,155.5 283.8,163.6" fill="#e2e0de"/><polygon points="265.8,160 283.8,165.2 283.8,210 265.8,204.7" fill="url(#sd)" stroke="#6e6e6e" stroke-width="0.5"/><polygon points="283.8,165.2 306.8,158.4 306.8,203.9 283.8,210.0" fill="url(#wd)"/><polygon points="306.8,158.4 310.8,157.2 310.8,202.8 306.8,203.9" fill="#dcdad6"/><polygon points="310.8,157.2 318.3,155.0 318.3,200.8 310.8,202.8" fill="#cfcdca"/><polygon points="283.8,165.2 318.3,155 318.3,200.8 283.8,210" fill="none" stroke="#6e6e6e" stroke-width="0.5"/><rect x="259.8" y="148" width="9" height="15" fill="#e89a58" stroke="#b87030" stroke-width="0.8"/><path d="M264.3 149V162" stroke="#b86a28" stroke-width="0.5"/><rect x="262.8" y="154" width="1" height="3" fill="#fff"/><rect x="265.8" y="154" width="1" height="3" fill="#fff"/><polygon points="372.7,160 405.7,149.3 425.2,155 390.7,165.2" fill="#b4b2b0" stroke="#6e6e6e" stroke-width="0.7"/><polygon points="377.2,160.3 405.7,151.2 420.7,155.5 390.7,163.6" fill="#e2e0de"/><polygon points="372.7,160 390.7,165.2 390.7,210 372.7,204.7" fill="url(#sd)" stroke="#6e6e6e" stroke-width="0.5"/><polygon points="390.7,165.2 413.7,158.4 413.7,203.9 390.7,210.0" fill="url(#wd)"/><polygon points="413.7,158.4 417.7,157.2 417.7,202.8 413.7,203.9" fill="#dcdad6"/><polygon points="417.7,157.2 425.2,155.0 425.2,200.8 417.7,202.8" fill="#cfcdca"/><polygon points="390.7,165.2 425.2,155 425.2,200.8 390.7,210" fill="none" stroke="#6e6e6e" stroke-width="0.5"/><rect x="366.7" y="148" width="9" height="15" fill="#e89a58" stroke="#b87030" stroke-width="0.8"/><path d="M371.2 149V162" stroke="#b86a28" stroke-width="0.5"/><rect x="369.7" y="154" width="1" height="3" fill="#fff"/><rect x="372.7" y="154" width="1" height="3" fill="#fff"/><polygon points="474.6,159.4 503.6,151.2 536.6,159.4 522.6,163.7 504.6,158.9 488.6,163.7" fill="#b8b6b4" stroke="#6e6e6e" stroke-width="0.7"/><polygon points="478.6,159.6 503.6,152.8 532.6,159.6 522.6,162.2 504.6,157.6 488.6,162.2" fill="#ebe9e6"/><polygon points="474.6,159.4 488.6,163.7 488.6,204.2 474.6,199.9" fill="url(#sd)" stroke="#6e6e6e" stroke-width="0.5"/><polygon points="522.6,163.7 536.6,159.4 536.6,199.9 522.6,204.2" fill="url(#sd)" stroke="#6e6e6e" stroke-width="0.5"/><polygon points="488.6,163.7 504.6,158.9 504.6,199.9 488.6,204.2" fill="url(#wd)"/><polygon points="504.6,158.9 522.6,163.7 522.6,204.2 504.6,199.9" fill="url(#wd)"/><path d="M488.6 163.7V204.2M522.6 163.7V204.2M504.6 158.9V199.9" stroke="#4a3a2a" stroke-width="0.6"/><polygon points="581.5,159.4 610.5,151.2 643.5,159.4 629.5,163.7 611.5,158.9 595.5,163.7" fill="#b8b6b4" stroke="#6e6e6e" stroke-width="0.7"/><polygon points="585.5,159.6 610.5,152.8 639.5,159.6 629.5,162.2 611.5,157.6 595.5,162.2" fill="#ebe9e6"/><polygon points="581.5,159.4 595.5,163.7 595.5,204.2 581.5,199.9" fill="url(#sd)" stroke="#6e6e6e" stroke-width="0.5"/><polygon points="629.5,163.7 643.5,159.4 643.5,199.9 629.5,204.2" fill="url(#sd)" stroke="#6e6e6e" stroke-width="0.5"/><polygon points="595.5,163.7 611.5,158.9 611.5,199.9 595.5,204.2" fill="url(#wd)"/><polygon points="611.5,158.9 629.5,163.7 629.5,204.2 611.5,199.9" fill="url(#wd)"/><path d="M595.5 163.7V204.2M629.5 163.7V204.2M611.5 158.9V199.9" stroke="#4a3a2a" stroke-width="0.6"/><polygon points="688.4,159.4 717.4,151.2 750.4,159.4 736.4,163.7 718.4,158.9 702.4,163.7" fill="#b8b6b4" stroke="#6e6e6e" stroke-width="0.7"/><polygon points="692.4,159.6 717.4,152.8 746.4,159.6 736.4,162.2 718.4,157.6 702.4,162.2" fill="#ebe9e6"/><polygon points="688.4,159.4 702.4,163.7 702.4,204.2 688.4,199.9" fill="url(#sd)" stroke="#6e6e6e" stroke-width="0.5"/><polygon points="736.4,163.7 750.4,159.4 750.4,199.9 736.4,204.2" fill="url(#sd)" stroke="#6e6e6e" stroke-width="0.5"/><polygon points="702.4,163.7 718.4,158.9 718.4,199.9 702.4,204.2" fill="url(#wd)"/><polygon points="718.4,158.9 736.4,163.7 736.4,204.2 718.4,199.9" fill="url(#wd)"/><path d="M702.4 163.7V204.2M736.4 163.7V204.2M718.4 158.9V199.9" stroke="#4a3a2a" stroke-width="0.6"/><polygon points="795.3,159.4 824.3,151.2 857.3,159.4 843.3,163.7 825.3,158.9 809.3,163.7" fill="#b8b6b4" stroke="#6e6e6e" stroke-width="0.7"/><polygon points="799.3,159.6 824.3,152.8 853.3,159.6 843.3,162.2 825.3,157.6 809.3,162.2" fill="#ebe9e6"/><polygon points="795.3,159.4 809.3,163.7 809.3,204.2 795.3,199.9" fill="url(#sd)" stroke="#6e6e6e" stroke-width="0.5"/><polygon points="843.3,163.7 857.3,159.4 857.3,199.9 843.3,204.2" fill="url(#sd)" stroke="#6e6e6e" stroke-width="0.5"/><polygon points="809.3,163.7 825.3,158.9 825.3,199.9 809.3,204.2" fill="url(#wd)"/><polygon points="825.3,158.9 843.3,163.7 843.3,204.2 825.3,199.9" fill="url(#wd)"/><path d="M809.3 163.7V204.2M843.3 163.7V204.2M825.3 158.9V199.9" stroke="#4a3a2a" stroke-width="0.6"/><polygon points="902.7,159.4 932.8000000000001,151.2 963.6,159.4 949.2,163.7 917.2,163.7" fill="#b8b6b4" stroke="#6e6e6e" stroke-width="0.7"/><polygon points="906.7,159.6 932.8000000000001,152.8 959.6,159.6 948.7,162.3 917.7,162.3" fill="#ebe9e6"/><path d="M932.8000000000001 152.8 V162.3" stroke="#d0cecc" stroke-width="0.7"/><polygon points="902.7,159.4 917.2,163.7 917.2,204.2 902.7,200" fill="url(#sd)" stroke="#6e6e6e" stroke-width="0.5"/><polygon points="949.2,163.7 963.6,159.4 963.6,200 949.2,204.2" fill="url(#sd)" stroke="#6e6e6e" stroke-width="0.5"/><rect x="917.2" y="163.7" width="32" height="40.5" fill="url(#wd)"/><polygon points="1009.5999999999999,159.4 1039.6999999999998,151.2 1070.5,159.4 1056.1,163.7 1024.1,163.7" fill="#b8b6b4" stroke="#6e6e6e" stroke-width="0.7"/><polygon points="1013.5999999999999,159.6 1039.6999999999998,152.8 1066.5,159.6 1055.6,162.3 1024.6,162.3" fill="#ebe9e6"/><path d="M1039.6999999999998 152.8 V162.3" stroke="#d0cecc" stroke-width="0.7"/><polygon points="1009.5999999999999,159.4 1024.1,163.7 1024.1,204.2 1009.5999999999999,200" fill="url(#sd)" stroke="#6e6e6e" stroke-width="0.5"/><polygon points="1056.1,163.7 1070.5,159.4 1070.5,200 1056.1,204.2" fill="url(#sd)" stroke="#6e6e6e" stroke-width="0.5"/><rect x="1024.1" y="163.7" width="32" height="40.5" fill="url(#wd)"/></svg>
<div class="a" style="left:26px;top:146px;width:33px;height:17px;background:#fff;border:1px solid #444"></div>
<div class="t" style="left:26px;top:147px;width:33px;text-align:center;letter-spacing:-0.2px">1/15</div>
<div class="a" style="left:40px;top:215px;width:76px;height:15px;background:#ededed"></div>
<div class="a" style="left:25px;top:144px;width:1005px;height:112px;overflow:hidden"><div class="t" style="left:-7.0px;top:71px;width:120px;text-align:center"><span style="display:inline-block;transform:scaleX(0.87)">ER Izq 950 mm</span></div>
<div class="t" style="left:99.9px;top:71px;width:120px;text-align:center"><span style="display:inline-block;transform:scaleX(0.87)">ER Izq 800 mm</span></div>
<div class="t" style="left:206.8px;top:71px;width:120px;text-align:center"><span style="display:inline-block;transform:scaleX(0.87)">ER Der 1000 mm</span></div>
<div class="t" style="left:313.7px;top:71px;width:120px;text-align:center"><span style="display:inline-block;transform:scaleX(0.87)">ER Der 800 mm</span></div>
<div class="t" style="left:420.6px;top:71px;width:120px;text-align:center"><span style="display:inline-block;transform:scaleX(0.87)">L Izq 950 mm</span></div>
<div class="t" style="left:527.5px;top:71px;width:120px;text-align:center"><span style="display:inline-block;transform:scaleX(0.87)">L 2P Izq 950 mm</span></div>
<div class="t" style="left:634.4px;top:71px;width:120px;text-align:center"><span style="display:inline-block;transform:scaleX(0.87)">L Der 950 mm</span></div>
<div class="t" style="left:741.3px;top:71px;width:120px;text-align:center"><span style="display:inline-block;transform:scaleX(0.87)">L 2P Der 950 mm</span></div>
<div class="t" style="left:848.2px;top:71px;width:120px;text-align:center"><span style="display:inline-block;transform:scaleX(0.87)">Oblicuo 1P 900 mm</span></div>
<div class="t" style="left:955.1px;top:71px;width:120px;text-align:center"><span style="display:inline-block;transform:scaleX(0.87)">Oblicuo 1P 800 mm</span></div>
</div><div class="a" style="left:1031px;top:143px;width:4px;height:114px;background:#f0f0f0"></div>
<svg class="a" style="left:27px;top:261px" width="16" height="16" viewBox="0 0 16 16"><circle cx="2" cy="2" r="1.6" fill="none" stroke="#2a6ab8" stroke-width="1"/><circle cx="2" cy="8" r="1.6" fill="none" stroke="#2a6ab8" stroke-width="1"/><circle cx="2" cy="14" r="1.6" fill="none" stroke="#2a6ab8" stroke-width="1"/><path d="M5 1.5H15" stroke="#888"/><path d="M6 15 Q6 8 11 6 L9 4 L15 4 L15 10 L13 8 Q9 10 9 15Z" fill="#50b030" stroke="#2a7a18" stroke-width="0.7"/></svg>
<div class="a" style="left:49px;top:262px;width:1px;height:16px;background:#c4c4c4"></div>
<svg class="a" style="left:54px;top:266px" width="15" height="5" viewBox="0 0 15 5"><rect x="0.5" y="0.5" width="14" height="4" rx="1.5" fill="#d8b880" stroke="#9a7a48" stroke-width="0.8"/></svg>
<svg class="a" style="left:72px;top:268px" width="6" height="4" viewBox="0 0 6 4"><path d="M0 0H6L3 3Z" fill="#000"/></svg>
<div class="a" style="left:85px;top:262px;width:1px;height:16px;background:#c4c4c4"></div>
<svg class="a" style="left:90px;top:261px" width="16" height="16" viewBox="0 0 16 16"><path d="M4 1H11L15 5V15H4Z" fill="#eaf2fa" stroke="#3a78b8" stroke-width="0.9"/><path d="M0 6H6V3L11 8L6 13V10H0Z" fill="#3ab040" stroke="#1a7020" stroke-width="0.7"/></svg>
<svg class="a" style="left:113px;top:261px" width="16" height="16" viewBox="0 0 16 16"><g fill="#333"><rect x="1" y="6" width="6" height="9" rx="1"/><rect x="9" y="6" width="6" height="9" rx="1"/><rect x="2" y="1" width="4" height="6"/><rect x="10" y="1" width="4" height="6"/><rect x="6" y="7" width="4" height="3"/></g><rect x="2.5" y="9" width="3" height="4" fill="#8ab0d8"/><rect x="10.5" y="9" width="3" height="4" fill="#8ab0d8"/></svg>
<svg class="a" style="left:136px;top:261px" width="17" height="16" viewBox="0 0 17 16"><rect x="1" y="8" width="6" height="8" rx="1" fill="#d8d8d8" stroke="#bbb" stroke-width="0.6"/><rect x="9" y="8" width="6" height="8" rx="1" fill="#d8d8d8" stroke="#bbb" stroke-width="0.6"/><path d="M4 7 Q4 2 9 2 L12 2 M10 0 L12 2 L10 4" fill="none" stroke="#bbb" stroke-width="1.3"/></svg>
<div class="a" style="left:158px;top:262px;width:1px;height:16px;background:#c4c4c4"></div>
<div class="a" style="left:160px;top:257px;width:21px;height:20px;background:linear-gradient(#f3f3f3,#e4e4e4);border:1px solid #cfcfcf;border-top:none;border-radius:0 0 3px 3px"></div>
<div class="a" style="left:182px;top:257px;width:21px;height:20px;background:linear-gradient(#f3f3f3,#e4e4e4);border:1px solid #cfcfcf;border-top:none;border-radius:0 0 3px 3px"></div>
<div class="a" style="left:204px;top:257px;width:76px;height:20px;background:#ffffff;border:1px solid #cfcfcf;border-top:none;border-radius:0 0 3px 3px"></div>
<div class="t" style="left:201px;top:260px;width:76px;text-align:center;letter-spacing:-0.35px">Esquineros</div>
<div class="a" style="left:281px;top:257px;width:108px;height:20px;background:linear-gradient(#f3f3f3,#e4e4e4);border:1px solid #cfcfcf;border-top:none;border-radius:0 0 3px 3px"></div>
<div class="t" style="left:278px;top:260px;width:108px;text-align:center;letter-spacing:-0.35px">Esquineros Bifold</div>
<div class="a" style="left:390px;top:257px;width:72px;height:20px;background:linear-gradient(#f3f3f3,#e4e4e4);border:1px solid #cfcfcf;border-top:none;border-radius:0 0 3px 3px"></div>
<div class="t" style="left:387px;top:260px;width:72px;text-align:center;letter-spacing:-0.35px">Gabinetes</div>
<div class="a" style="left:463px;top:257px;width:75px;height:20px;background:linear-gradient(#f3f3f3,#e4e4e4);border:1px solid #cfcfcf;border-top:none;border-radius:0 0 3px 3px"></div>
<div class="t" style="left:460px;top:260px;width:75px;text-align:center;letter-spacing:-0.35px">Especiales</div>
<div class="a" style="left:539px;top:257px;width:71px;height:20px;background:linear-gradient(#f3f3f3,#e4e4e4);border:1px solid #cfcfcf;border-top:none;border-radius:0 0 3px 3px"></div>
<div class="t" style="left:536px;top:260px;width:71px;text-align:center;letter-spacing:-0.35px">Cajoneros</div>
<div class="a" style="left:611px;top:257px;width:73px;height:20px;background:linear-gradient(#f3f3f3,#e4e4e4);border:1px solid #cfcfcf;border-top:none;border-radius:0 0 3px 3px"></div>
<div class="t" style="left:608px;top:260px;width:73px;text-align:center;letter-spacing:-0.35px">p/ Electros</div>
<div class="a" style="left:685px;top:257px;width:78px;height:20px;background:linear-gradient(#f3f3f3,#e4e4e4);border:1px solid #cfcfcf;border-top:none;border-radius:0 0 3px 3px"></div>
<div class="t" style="left:682px;top:260px;width:78px;text-align:center;letter-spacing:-0.35px">Fregaderos</div>
<div class="a" style="left:764px;top:257px;width:77px;height:20px;background:linear-gradient(#f3f3f3,#e4e4e4);border:1px solid #cfcfcf;border-top:none;border-radius:0 0 3px 3px"></div>
<div class="t" style="left:761px;top:260px;width:77px;text-align:center;letter-spacing:-0.35px">Diagonales</div>
<div class="a" style="left:842px;top:257px;width:21px;height:20px;background:linear-gradient(#f3f3f3,#e4e4e4);border:1px solid #cfcfcf;border-top:none;border-radius:0 0 3px 3px"></div>
<svg class="a" style="left:166px;top:263px" width="8" height="5" viewBox="0 0 8 5"><path d="M0.8 4.2L4 1L7.2 4.2" fill="none" stroke="#000" stroke-width="1.5"/></svg>
<svg class="a" style="left:190px;top:262px" width="5" height="8" viewBox="0 0 5 8"><path d="M4.2 0.8L1 4L4.2 7.2" fill="none" stroke="#000" stroke-width="1.5"/></svg>
<svg class="a" style="left:850px;top:262px" width="5" height="8" viewBox="0 0 5 8"><path d="M0.8 0.8L4 4L0.8 7.2" fill="none" stroke="#000" stroke-width="1.5"/></svg>
<div class="a" style="left:867px;top:262px;width:163px;height:1px;background:#fafafa"></div>
<div class="a" style="left:884px;top:269px;width:78px;height:2px;background:#8a8a8a"></div>
<div class="a" style="left:23px;top:284px;width:1008px;height:400px;border:1px solid #a0a0a0;border-bottom-color:#a0a0a0;background:#f0f0f0"></div>
<div class="a" style="left:26px;top:287px;width:999px;height:368px;background:#404040"></div>
<svg class="a" style="left:26px;top:287px" width="1000" height="368" viewBox="26 287 1000 368">
<defs>
<linearGradient id="lw" x1="0" x2="1"><stop offset="0" stop-color="#c2c2c2"/><stop offset="1" stop-color="#c8c8c8"/></linearGradient>
<linearGradient id="rw" x1="0" x2="1"><stop offset="0" stop-color="#c6c6c6"/><stop offset="1" stop-color="#bcbcbc"/></linearGradient>
<linearGradient id="bw" x1="0" x2="0" y1="0" y2="1"><stop offset="0" stop-color="#d9d9d9"/><stop offset="1" stop-color="#d0d0d0"/></linearGradient>
</defs>
<polygon points="369,312.5 661.3,312.5 682.4,617.5 345,617.5" fill="#fff" stroke="#000" stroke-width="1.1"/>
<polygon points="376.6,320.5 653.4,320.5 671.9,607.8 355,607.8" fill="#c4c4c4" stroke="#000" stroke-width="1"/>
<polygon points="376.6,320.5 653.4,320.5 623.7,377 411.6,377" fill="url(#bw)" stroke="#000" stroke-width="1"/>
<polygon points="376.6,320.5 411.6,377 399,596.8 355,607.8" fill="url(#lw)" stroke="#000" stroke-width="1"/>
<polygon points="653.4,320.5 671.9,607.8 634.4,597 623.7,377" fill="url(#rw)" stroke="#000" stroke-width="1"/>
<polygon points="355,607.8 399,596.8 634.4,597 671.9,607.8" fill="#b4b4b4" stroke="#000" stroke-width="1"/>
<polygon points="411.6,377 623.7,377 634.4,597 399,597" fill="#a98a50" stroke="#151515" stroke-width="1"/>
<path d="M412 379.2 H623 M621.6 379.2 L632 594.8 M400 594.8 H633 M401.5 594.8 L413.8 379.2" stroke="#2a2010" stroke-width="3.6" stroke-dasharray="1.1 11.3" fill="none"/>
<path d="M413 378.6 H622.5 M400.5 595.4 H633" stroke="#d0b070" stroke-width="0.8" stroke-dasharray="9 3.4" stroke-dashoffset="-1.5" fill="none"/>
<polygon points="416.2,381.2 619.4,381.2 629.6,592.4 403.8,592.4" fill="#fff" stroke="#151515" stroke-width="1"/>
<path d="M345 617.5 L355 607.8" stroke="#000" stroke-width="0.9"/>
</svg>
<svg class="a" style="left:26px;top:610px" width="42" height="32" viewBox="0 0 42 32"><path d="M20 24.5 L24 6" stroke="#50d050" stroke-width="1.2"/><path d="M24 2 L21 9 L26 9Z" fill="#70e070"/><path d="M20 24.5 H35" stroke="#ff1010" stroke-width="1.2"/><path d="M39 24.5 L32 21.5 L32 27.5Z" fill="#ff1010"/><path d="M20 24.5 L3 27" stroke="#1010ff" stroke-width="1.4"/><circle cx="5" cy="26.8" r="2.4" fill="#1010ff"/></svg>
<div class="a" style="left:25px;top:655px;width:1005px;height:28px;background:linear-gradient(#fdfdfd,#f2f2f2)"></div>
<div class="a" style="left:25px;top:655px;width:1005px;height:5px;background:#f0f0f0"></div>
<svg class="a" style="left:29px;top:664px" width="15" height="15" viewBox="0 0 15 15"><circle cx="3" cy="12" r="2.2" fill="#1a78d0"/><path d="M1.5 6.5 Q8 6.5 8.5 13.5" fill="none" stroke="#1a78d0" stroke-width="2.4"/><path d="M1.5 1.8 Q13 1.8 13.3 13.5" fill="none" stroke="#1a78d0" stroke-width="2.4"/></svg>
<div class="t" style="left:47px;top:665px;letter-spacing:-0.1px">Connect</div>
<svg class="a" style="left:105px;top:664px" width="15" height="15" viewBox="0 0 15 15"><circle cx="7.5" cy="7.5" r="7" fill="#6ab8f0"/><path d="M0.5 7.5H14.5M7.5 0.5V14.5M2 3.5H13M2 11.5H13" stroke="#fff" stroke-width="0.7"/><ellipse cx="7.5" cy="7.5" rx="3.5" ry="7" fill="none" stroke="#fff" stroke-width="0.7"/></svg>
<div class="t" style="left:123px;top:665px;letter-spacing:-0.3px">Conexión P</div>
<div class="a" style="left:193px;top:661px;width:65px;height:21px;border:1px solid #0078d7;background:#fff"></div>
<svg class="a" style="left:196px;top:663px" width="16" height="16" viewBox="0 0 16 16"><path d="M1 4 H6 L7 5.5 H14 V14 H1Z" fill="#f0d890" stroke="#b8982a" stroke-width="0.8"/><path d="M3 4 L5 1 L10 2" fill="none" stroke="#888" stroke-width="0.6"/><path d="M1 14 L3.5 8 H15.5 L13 14Z" fill="#f8e8b0" stroke="#b8982a" stroke-width="0.8"/></svg>
<div class="t" style="left:214px;top:665px;letter-spacing:-0.1px">Projeto</div>
<div class="a" style="left:942px;top:660px;width:1px;height:23px;background:#d0d0d0"></div>
<div class="a" style="left:948px;top:661px;width:52px;height:21px;border:1px solid #0078d7;background:#fff"></div>
<svg class="a" style="left:951px;top:663px" width="15" height="16" viewBox="0 0 15 16"><path d="M2 0.5H9L13 4.5V15.5H2Z" fill="#fff" stroke="#999" stroke-width="0.8"/><circle cx="8" cy="11" r="4" fill="#9ab0c8"/><path d="M6 10 L10 12" stroke="#e8a020" stroke-width="1.5"/></svg>
<div class="t" style="left:969px;top:665px;">teste</div>
<svg class="a" style="left:1012px;top:667px" width="9" height="9" viewBox="0 0 9 9"><path d="M1 1L8 8M8 1L1 8" stroke="#8a8a8a" stroke-width="2.1"/></svg>
<div class="a" style="left:27px;top:687px;width:84px;height:21px;background:#f0f0f0;border:1px solid #707070;border-bottom:none;border-radius:3px 3px 0 0"></div>
<svg class="a" style="left:32px;top:690px" width="15" height="14" viewBox="0 0 15 14"><rect x="0.5" y="0.5" width="14" height="13" fill="#fff" stroke="#3a78c0"/><rect x="0.5" y="0.5" width="14" height="3" fill="#3a78c0"/><rect x="3" y="6" width="4" height="4" fill="#60b060"/><rect x="8" y="6" width="4" height="4" fill="#e06060"/></svg>
<div class="t" style="left:51px;top:690px;color:#6a6a6a;letter-spacing:-0.1px">Materiales</div>
<svg class="a" style="left:962px;top:711px" width="17" height="12" viewBox="0 0 17 12"><path d="M0.5 3 L3 2.5" stroke="#000" stroke-width="1.2"/><path d="M3 1 V6" stroke="#000" stroke-width="1.2"/><ellipse cx="5" cy="7.5" rx="3" ry="3" fill="none" stroke="#000" stroke-width="1.3"/><ellipse cx="12" cy="7.5" rx="3" ry="3" fill="none" stroke="#000" stroke-width="1.3"/><path d="M8 7 Q8.5 5.5 9 7" fill="none" stroke="#000" stroke-width="1.1"/><path d="M15 7 L16.5 3" stroke="#000" stroke-width="1.2"/></svg>
<div class="t" style="left:981px;top:711px;">Mostrar</div>
<svg class="a" style="left:1026px;top:716px" width="7" height="4" viewBox="0 0 7 4"><path d="M0 0H7L3.5 3.5Z" fill="#000"/></svg>
<div class="a" style="left:1042px;top:708px;width:71px;height:19px;border:1px solid #0078d7;background:#f0f0f0"></div>
<svg class="a" style="left:1045px;top:709px" width="16" height="16" viewBox="0 0 16 16"><rect x="1" y="1" width="2" height="15" fill="#c8c8c8" stroke="#888" stroke-width="0.5"/><path d="M4 6 H9 L9 16 H4Z" fill="#9a7040"/><path d="M9 9H15M9 12H15M9 15H15" stroke="#444" stroke-width="1"/></svg>
<div class="t" style="left:1063px;top:711px;">Colisión</div>
<div class="a" style="left:1117px;top:708px;width:107px;height:19px;border:1px solid #0078d7;background:#f0f0f0"></div>
<svg class="a" style="left:1119px;top:709px" width="16" height="16" viewBox="0 0 16 16"><rect x="0" y="0" width="16" height="16" fill="#b89068"/><path d="M0 5H16M0 11H16M8 0V16" stroke="#6a4a28" stroke-width="0.8"/><path d="M8 4 V12 M4 8 H12" stroke="#e00000" stroke-width="2.6"/></svg>
<div class="t" style="left:1138px;top:711px;letter-spacing:-0.1px">Acoplamientos</div>
<svg class="a" style="left:1232px;top:710px" width="14" height="16" viewBox="0 0 14 16"><path d="M7 0 L5 4 L7 6 L9 4Z" fill="#e02020"/><path d="M7 6 V9" stroke="#e02020"/><rect x="1" y="10" width="12" height="6" fill="#f0c860" stroke="#a08030" stroke-width="0.6"/><path d="M1 13H13M7 10V16" stroke="#a08030" stroke-width="0.6"/></svg>
<div class="t" style="left:1249px;top:711px;letter-spacing:-0.1px">Auto Rebajar</div>
<svg class="a" style="left:1331px;top:709px" width="18" height="17" viewBox="0 0 18 17"><path d="M3 2 Q1 5 3 7 Q5 9 8 8 L15 15 L17 13 L10 6 Q11 3 9 1 Q7 0 5 1 L7 3 L5 5Z" fill="#d8d8d8" stroke="#888" stroke-width="0.7"/><path d="M11 11 L15 15 L17 13 L13 9Z" fill="#f0b020"/></svg>
<div class="a" style="left:1031px;top:82px;width:4px;height:602px;background:#f0f0f0"></div>
<div class="t" style="left:1041px;top:85px;letter-spacing:-0.1px">Herramientas - Propiedades</div>
<svg class="a" style="left:1351px;top:87px" width="9" height="11" viewBox="0 0 9 11"><path d="M2 0.5H7M2.5 0.5V6M6.5 0.5V6M0.5 6.5H8.5M4.5 6.5V11" stroke="#000" stroke-width="1.2" fill="none"/><rect x="2.5" y="1" width="2" height="5" fill="#000"/></svg>
<div class="a" style="left:1040px;top:115px;width:322px;height:24px;border:1px solid #0078d7;background:#f0f0f0"></div>
<svg class="a" style="left:1045px;top:119px" width="16" height="15" viewBox="0 0 16 15"><rect x="0.5" y="4.5" width="12" height="10" rx="1.5" fill="#fff" stroke="#2a78c8" stroke-width="1"/><path d="M3 8.5H10M3 11H10" stroke="#2a78c8" stroke-width="0.9"/><path d="M3 6 Q6 0 12 1 L15 3 L12 6Z" fill="#e8c070" stroke="#a07828" stroke-width="0.6"/><rect x="13" y="0" width="3" height="5" fill="#5a5aa0"/></svg>
<div class="t" style="left:1067px;top:119px;letter-spacing:-0.3px">Propiedades</div>
<div class="a" style="left:1040px;top:149px;width:321px;height:531px;border:1px solid #828282;background:#f0f0f0"></div>
<div class="a" style="left:1041px;top:150px;width:319px;height:24px;background:linear-gradient(#fdfdfd,#eeeeee)"></div>
<svg class="a" style="left:1047px;top:154px" width="15" height="15" viewBox="0 0 15 15"><rect x="0.5" y="4.5" width="12" height="10" rx="1" fill="#fff" stroke="#2a78c8" stroke-width="1"/><path d="M3 8H6M3 11H6M9 7V13M6.5 10H11.5" stroke="#2a78c8" stroke-width="0.9"/><path d="M3 5 Q6 0 12 1 L15 3 L12 6Z" fill="#e8c070" stroke="#a07828" stroke-width="0.6"/></svg>
<div class="t" style="left:1065px;top:155px;letter-spacing:-0.2px">Avanzado</div>
<div class="a" style="left:1127px;top:155px;width:1px;height:15px;background:#c0c0c0"></div>
<svg class="a" style="left:1133px;top:155px" width="15" height="15" viewBox="0 0 15 15"><g fill="#2a78c8"><rect x="0" y="0.5" width="14" height="4"/><rect x="0" y="5.5" width="14" height="4"/><rect x="0" y="10.5" width="14" height="4"/></g><path d="M9 2.5H12M9 7.5H12M9 12.5H12" stroke="#fff" stroke-width="0.8"/></svg>
<svg class="a" style="left:1156px;top:155px" width="15" height="15" viewBox="0 0 15 15"><rect x="0.5" y="0.5" width="13" height="13" fill="#fff" stroke="#2a78c8"/><rect x="0.5" y="0.5" width="13" height="3" fill="#2a78c8"/><path d="M1 6.5H13M1 9H13M1 11.5H13M7 4V13" stroke="#2a78c8" stroke-width="0.8"/></svg>
<div class="a" style="left:1356px;top:158px;width:1px;height:15px;background:#c8c8c8"></div>
<div class="a" style="left:1045px;top:180px;width:52px;height:21px;background:linear-gradient(#fbfbfb,#f3f3f3);border:1px solid #fdfdfd;border-bottom:none;border-right-color:#e0e0e0"></div>
<div class="t" style="left:1051px;top:184px;letter-spacing:-0.3px">General</div>
<div class="a" style="left:1045px;top:200px;width:310px;height:476px;border:1px solid #fafafa;border-right-color:#e4e4e4;border-bottom-color:#f8f8f8;background:#f6f6f6"></div>
<div class="a" style="left:1051px;top:205px;width:299px;height:466px;background:#f0f0f0"></div>
<div class="t" style="left:1120px;top:432px;letter-spacing:-0.35px">No hay propiedades disponibles!</div>
<svg class="a" style="left:830px;top:0px" width="90" height="70" viewBox="830 0 90 70">
<path d="M848.5 5.5 L897 55" stroke="#ff0000" stroke-width="7" stroke-linecap="round" fill="none"/>
<path d="M866 47.5 Q878 42 899 58" stroke="#ff0000" stroke-width="6.5" stroke-linecap="round" fill="none"/>
<path d="M891 27 Q888 42 899 58" stroke="#ff0000" stroke-width="6" stroke-linecap="round" fill="none"/>
<path d="M874 46 L890 34 L899 58Z" fill="#ff0000"/>
</svg>

</body></html>
